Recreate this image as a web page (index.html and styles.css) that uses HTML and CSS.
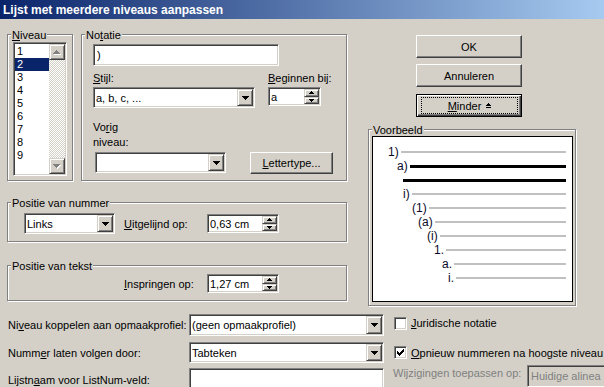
FILE: index.html
```html
<!DOCTYPE html>
<html lang="nl">
  <head>
    <meta charset="UTF-8" />
    <meta name="viewport" content="width=device-width, initial-scale=1.0" />
    <title>Lijst met meerdere niveaus aanpassen</title>
    <link rel="stylesheet" href="styles.css">
  </head>
  <body>
    <div class="window">
      <div class="titlebar">Lijst met meerdere niveaus aanpassen</div>

      <div class="main">
        <div class="left-col">
          <div class="top-row">
            <div class="group niveau-group">
              <span class="legend"><u>N</u>iveau</span>
              <div class="listbox sunken">
                <ul class="list-items">
                  <li>1</li>
                  <li class="selected">2</li>
                  <li>3</li>
                  <li>4</li>
                  <li>5</li>
                  <li>6</li>
                  <li>7</li>
                  <li>8</li>
                  <li>9</li>
                </ul>
                <div class="vscroll">
                  <span class="raised scroll-btn">
                    <svg width="8" height="5" viewBox="0 0 8 5"><path fill="#fff" d="M4 1h1v1H4zM3 2h3v1H3zM2 3h5v1H2zM1 4h7v1H1z"/><path fill="#808080" d="M3 0h1v1H3zM2 1h3v1H2zM1 2h5v1H1zM0 3h7v1H0z"/></svg>
                  </span>
                  <span class="scroll-track"></span>
                  <span class="raised scroll-btn">
                    <svg width="8" height="5" viewBox="0 0 8 5"><path fill="#fff" d="M1 1h7v1H1zM2 2h5v1H2zM3 3h3v1H3zM4 4h1v1H4z"/><path fill="#808080" d="M0 0h7v1H0zM1 1h5v1H1zM2 2h3v1H2zM3 3h1v1H3z"/></svg>
                  </span>
                </div>
              </div>
            </div>

            <div class="group notatie-group">
              <span class="legend">No<u>t</u>atie</span>
              <div class="sunken textbox notatie-input">)</div>
              <div class="stijl-row">
                <div class="field">
                  <div class="label"><u>S</u>tijl:</div>
                  <div class="sunken combo stijl-combo">
                    <span class="value">a, b, c, ...</span>
                    <span class="raised drop-btn"><svg width="7" height="4" viewBox="0 0 7 4"><path d="M0 0h7v1H0zM1 1h5v1H1zM2 2h3v1H2zM3 3h1v1H3z"/></svg></span>
                  </div>
                </div>
                <div class="field begin-field">
                  <div class="label"><u>B</u>eginnen bij:</div>
                  <div class="sunken spin begin-spin">
                    <span class="value">a</span>
                    <span class="spin-btns">
                      <span class="raised spin-btn"><svg width="5" height="3" viewBox="0 0 5 3"><path d="M2 0h1v1H2zM1 1h3v1H1zM0 2h5v1H0z"/></svg></span>
                      <span class="raised spin-btn"><svg width="5" height="3" viewBox="0 0 5 3"><path d="M0 0h5v1H0zM1 1h3v1H1zM2 2h1v1H2z"/></svg></span>
                    </span>
                  </div>
                </div>
              </div>
              <div class="vorig-label">Vo<u>r</u>ig<br>niveau:</div>
              <div class="vorig-row">
                <div class="sunken combo vorig-combo">
                  <span class="value"></span>
                  <span class="raised drop-btn"><svg width="7" height="4" viewBox="0 0 7 4"><path d="M0 0h7v1H0zM1 1h5v1H1zM2 2h3v1H2zM3 3h1v1H3z"/></svg></span>
                </div>
                <button class="btn lettertype-btn"><u>L</u>ettertype...</button>
              </div>
            </div>
          </div>

          <div class="group pos-nummer">
            <span class="legend">Positie van nummer</span>
            <div class="pos-row">
              <div class="sunken combo links-combo">
                <span class="value">Links</span>
                <span class="raised drop-btn"><svg width="7" height="4" viewBox="0 0 7 4"><path d="M0 0h7v1H0zM1 1h5v1H1zM2 2h3v1H2zM3 3h1v1H3z"/></svg></span>
              </div>
              <div class="pos-label"><u>U</u>itgelijnd op:</div>
              <div class="sunken spin cm-spin">
                <span class="value">0,63 cm</span>
                <span class="spin-btns">
                  <span class="raised spin-btn"><svg width="5" height="3" viewBox="0 0 5 3"><path d="M2 0h1v1H2zM1 1h3v1H1zM0 2h5v1H0z"/></svg></span>
                  <span class="raised spin-btn"><svg width="5" height="3" viewBox="0 0 5 3"><path d="M0 0h5v1H0zM1 1h3v1H1zM2 2h1v1H2z"/></svg></span>
                </span>
              </div>
            </div>
          </div>

          <div class="group pos-tekst">
            <span class="legend">Positie van tekst</span>
            <div class="pos-row">
              <div class="pos-label"><u>I</u>nspringen op:</div>
              <div class="sunken spin cm-spin">
                <span class="value">1,27 cm</span>
                <span class="spin-btns">
                  <span class="raised spin-btn"><svg width="5" height="3" viewBox="0 0 5 3"><path d="M2 0h1v1H2zM1 1h3v1H1zM0 2h5v1H0z"/></svg></span>
                  <span class="raised spin-btn"><svg width="5" height="3" viewBox="0 0 5 3"><path d="M0 0h5v1H0zM1 1h3v1H1zM2 2h1v1H2z"/></svg></span>
                </span>
              </div>
            </div>
          </div>
        </div>

        <div class="right-col">
          <button class="btn dlg-btn ok-btn">OK</button>
          <button class="btn dlg-btn cancel-btn">Annuleren</button>
          <button class="btn dlg-btn minder-btn">
            <span class="focus-rect"><u>M</u>inder <svg class="minder-icon" width="5" height="5" viewBox="0 0 5 5"><path d="M2 0h1v1H2zM1 1h3v1H1zM0 2h5v1H0zM0 4h5v1H0z"/></svg></span>
          </button>

          <div class="group voorbeeld-group">
            <span class="legend">Voorbeeld</span>
            <div class="preview">
              <div class="pv-row" style="--indent: 15px"><span>1)</span><span class="pv-line"></span></div>
              <div class="pv-row" style="--indent: 24px"><span>a)</span><span class="pv-line current"></span></div>
              <div class="pv-row" style="--indent: 30px"><span class="pv-line current flush"></span></div>
              <div class="pv-row" style="--indent: 30px"><span>i)</span><span class="pv-line"></span></div>
              <div class="pv-row" style="--indent: 39px"><span>(1)</span><span class="pv-line"></span></div>
              <div class="pv-row" style="--indent: 45px"><span>(a)</span><span class="pv-line"></span></div>
              <div class="pv-row" style="--indent: 54px"><span>(i)</span><span class="pv-line"></span></div>
              <div class="pv-row" style="--indent: 61px"><span>1.</span><span class="pv-line"></span></div>
              <div class="pv-row" style="--indent: 69px"><span>a.</span><span class="pv-line"></span></div>
              <div class="pv-row" style="--indent: 75px"><span>i.</span><span class="pv-line"></span></div>
            </div>
          </div>
        </div>
      </div>

      <div class="bottom">
        <div class="brow brow-1">
          <div class="brow-label">Ni<u>v</u>eau koppelen aan opmaakprofiel:</div>
          <div class="sunken combo bcombo">
            <span class="value">(geen opmaakprofiel)</span>
            <span class="raised drop-btn"><svg width="7" height="4" viewBox="0 0 7 4"><path d="M0 0h7v1H0zM1 1h5v1H1zM2 2h3v1H2zM3 3h1v1H3z"/></svg></span>
          </div>
          <div class="check-item up">
            <span class="sunken checkbox"></span>
            <span class="check-label"><u>J</u>uridische notatie</span>
          </div>
        </div>
        <div class="brow brow-2">
          <div class="brow-label">Numm<u>e</u>r laten volgen door:</div>
          <div class="sunken combo bcombo">
            <span class="value">Tabteken</span>
            <span class="raised drop-btn"><svg width="7" height="4" viewBox="0 0 7 4"><path d="M0 0h7v1H0zM1 1h5v1H1zM2 2h3v1H2zM3 3h1v1H3z"/></svg></span>
          </div>
          <div class="check-item">
            <span class="sunken checkbox"><svg width="7" height="7" viewBox="0 0 7 7"><path d="M6 0h1v1H6zM5 1h2v1H5zM0 2h1v1H0zM4 2h3v1H4zM0 3h2v1H0zM3 3h3v1H3zM0 4h5v1H0zM1 5h3v1H1zM2 6h1v1H2z"/></svg></span>
            <span class="check-label"><u>O</u>pnieuw nummeren na hoogste niveau</span>
          </div>
        </div>
        <div class="brow brow-3">
          <div class="brow-label">Lijstn<u>a</u>am voor ListNum-veld:</div>
          <div class="sunken textbox bcombo"></div>
          <div class="apply">
            <span class="apply-label">Wijzigingen toepassen op:</span>
            <span class="apply-box">Huidige alinea</span>
          </div>
        </div>
      </div>
    </div>
  </body>
</html>
```

FILE: styles.css
```css
* {
  box-sizing: border-box;
}

body {
  margin: 0;
  background: #d4d0c8;
  font-family: "Liberation Sans", Arial, sans-serif;
  font-size: 11px;
  color: #000;
}

.window {
  width: 604px;
  height: 387px;
  overflow: hidden;
}

.titlebar {
  height: 19px;
  padding: 1px 0 0 3px;
  line-height: 18px;
  font-size: 12px;
  font-weight: bold;
  color: #fff;
  white-space: nowrap;
  background: linear-gradient(to right, #0a246a, #a6caf0);
}

.main {
  display: grid;
  grid-template-columns: 341px 1fr;
  height: 288px;
  padding-left: 7px;
}

/* group boxes */
.group {
  border: 1px solid #808080;
  box-shadow: inset 1px 1px 0 #fff, 1px 1px 0 #fff;
}

.legend {
  display: table;
  margin: -6px 0 0 3px;
  padding: 0 1px;
  line-height: 13px;
  background: #d4d0c8;
  white-space: nowrap;
}

/* 3d borders */
.sunken {
  border: 1px solid;
  border-color: #808080 #fff #fff #808080;
  box-shadow: inset 1px 1px 0 #404040, inset -1px -1px 0 #d4d0c8;
  background: #fff;
  padding: 1px;
}

.raised {
  display: flex;
  align-items: center;
  justify-content: center;
  border: 1px solid;
  border-color: #d4d0c8 #404040 #404040 #d4d0c8;
  box-shadow: inset 1px 1px 0 #fff, inset -1px -1px 0 #808080;
  background: #d4d0c8;
}

.btn {
  display: block;
  padding: 0;
  font: inherit;
  color: #000;
  background: #d4d0c8;
  border: 1px solid;
  border-color: #fff #404040 #404040 #fff;
  box-shadow: inset -1px -1px 0 #808080;
}

/* controls */
.textbox {
  display: flex;
  align-items: center;
  padding-left: 3px;
}

.combo,
.spin {
  display: flex;
}

.combo .value,
.spin .value {
  flex: 1;
  display: flex;
  align-items: center;
  padding-left: 1px;
  overflow: hidden;
  white-space: nowrap;
}

.drop-btn {
  width: 16px;
}

.spin-btns {
  width: 15px;
  display: flex;
  flex-direction: column;
}

.spin-btn {
  flex: 1;
}

/* niveau list */
.top-row {
  display: flex;
  gap: 8px;
  margin-top: 15px;
}

.niveau-group {
  width: 66px;
  height: 147px;
}

.listbox {
  display: flex;
  width: 54px;
  height: 134px;
  margin-left: 5px;
}

.list-items {
  flex: 1;
  margin: 0;
  padding: 1px 0 0 0;
  list-style: none;
}

.list-items li {
  height: 13px;
  line-height: 13px;
  padding-left: 2px;
}

.list-items .selected {
  background: #0a246a;
  color: #fff;
}

.vscroll {
  width: 16px;
  display: flex;
  flex-direction: column;
}

.scroll-btn {
  height: 16px;
}

.scroll-track {
  flex: 1;
  background: repeating-conic-gradient(#fff 0 25%, #d4d0c8 0 50%) 0 0 / 2px 2px;
}

/* notatie */
.notatie-group {
  width: 266px;
  height: 147px;
}

.notatie-input {
  width: 186px;
  height: 22px;
  margin: 2px 0 0 11px;
}

.stijl-row {
  display: flex;
  margin: 6px 0 0 11px;
}

.field .label {
  height: 13px;
  line-height: 13px;
  margin-bottom: 2px;
  white-space: nowrap;
}

.stijl-combo {
  width: 162px;
  height: 21px;
}

.begin-field {
  margin-left: 13px;
}

.begin-spin {
  width: 53px;
  height: 19px;
}

.vorig-label {
  margin: 12px 0 0 11px;
  line-height: 15px;
}

.vorig-row {
  display: flex;
  align-items: flex-start;
  margin: 2px 0 0 13px;
}

.vorig-combo {
  width: 131px;
  height: 21px;
}

.lettertype-btn {
  width: 83px;
  height: 22px;
  margin-left: 24px;
}

/* positie */
.pos-nummer {
  width: 340px;
  height: 40px;
  margin-top: 21px;
}

.pos-tekst {
  width: 340px;
  height: 36px;
  margin-top: 23px;
}

.pos-row {
  display: flex;
  align-items: center;
  margin: 3px 0 0 16px;
}

.pos-tekst .pos-row {
  margin: 1px 0 0 116px;
}

.links-combo {
  width: 91px;
  height: 21px;
}

.pos-label {
  width: 83px;
  margin-left: 9px;
  white-space: nowrap;
}

.pos-tekst .pos-label {
  margin-left: 0;
}

.cm-spin {
  width: 72px;
  height: 19px;
}

/* right side */
.dlg-btn {
  width: 106px;
  height: 23px;
  margin-left: 68px;
}

.ok-btn {
  margin-top: 16px;
}

.cancel-btn {
  margin-top: 6px;
}

.minder-btn {
  margin-top: 7px;
  padding: 2px 3px 2px 4px;
  border-color: #000;
  box-shadow: inset 1px 1px 0 #fff, inset -1px -1px 0 #404040, inset -2px -2px 0 #808080;
}

.focus-rect {
  display: flex;
  align-items: center;
  justify-content: center;
  height: 100%;
  border: 1px dotted #000;
}

.minder-icon {
  margin-left: 5px;
}

.voorbeeld-group {
  width: 208px;
  height: 177px;
  margin: 12px 0 0 20px;
}

.preview {
  width: 201px;
  height: 166px;
  margin: -1px 0 0 3px;
  padding: 8px 6px 0 0;
  border: 1px solid #000;
  background: #fff;
}

.pv-row {
  display: flex;
  align-items: center;
  height: 14px;
  padding-left: var(--indent);
  font-size: 12px;
  line-height: 14px;
  color: #0a0a28;
}

.pv-line {
  flex: 1;
  height: 2px;
  margin-left: 2px;
  background: #c0c0c0;
}

.pv-line.current {
  height: 3px;
  background: #000;
}

.pv-line.flush {
  margin-left: 0;
}

/* bottom rows */
.bottom {
  margin-top: 7px;
  padding-left: 8px;
}

.brow {
  display: flex;
  align-items: center;
}

.brow > * {
  flex: none;
}

.brow-1 {
  height: 22px;
}

.brow-2 {
  height: 21px;
  margin-top: 6px;
}

.brow-3 {
  height: 24px;
  margin-top: 5px;
}

.brow-label {
  width: 181px;
  white-space: nowrap;
}

.bcombo {
  width: 195px;
  height: 100%;
}

.check-item {
  display: flex;
  align-items: center;
  margin-left: 10px;
}

.check-item.up {
  margin-bottom: 4px;
}

.checkbox {
  display: flex;
  align-items: center;
  justify-content: center;
  width: 13px;
  height: 13px;
}

.check-label {
  margin-left: 4px;
  white-space: nowrap;
}

.apply {
  display: flex;
  align-items: flex-start;
  align-self: flex-start;
  margin: -3px 0 0 9px;
}

.apply-label {
  flex: none;
  width: 134px;
  padding-top: 2px;
  line-height: 13px;
  color: #808080;
  white-space: nowrap;
}

.apply-box {
  flex: none;
  display: flex;
  align-items: center;
  width: 100px;
  height: 22px;
  padding-left: 3px;
  color: #808080;
  background: #d4d0c8;
  border: 1px solid;
  border-color: #808080 #fff #fff #808080;
  box-shadow: inset 1px 1px 0 #404040;
  white-space: nowrap;
}
```
